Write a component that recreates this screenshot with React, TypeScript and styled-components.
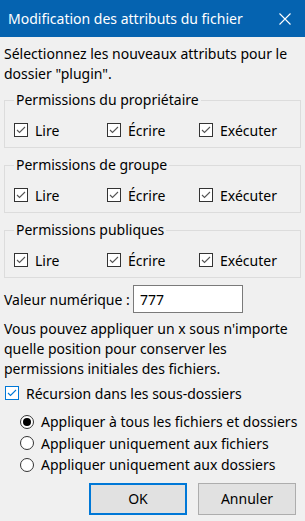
import styled, { createGlobalStyle } from 'styled-components';

const GlobalStyle = createGlobalStyle`
  html, body {
    margin: 0;
    padding: 0;
    background: #f0f0f0;
  }
  body {
    font-family: 'Noto Sans', 'Open Sans', sans-serif;
    font-size: 14px;
    color: #000;
  }
`;

const Window = styled.div`
  width: 305px;
  height: 521px;
  display: flex;
  flex-direction: column;
  background: #f0f0f0;
  overflow: hidden;
`;

const TitleBar = styled.div`
  height: 37px;
  flex: none;
  background: #0563b0;
  color: #fff;
  display: flex;
  align-items: center;
  justify-content: space-between;
  padding: 0 14px 0 8px;
  font-size: 14px;
`;

const Body = styled.div`
  padding: 0 4px;
  display: flex;
  flex-direction: column;
`;

const Text = styled.p<{ $top: number }>`
  margin: ${(p) => p.$top}px 0 0;
  line-height: 20px;
`;

const Group = styled.fieldset`
  margin: 6px 0 0;
  padding: 10px 0 7px 9px;
  border: 1px solid #dcdcdc;
  min-width: 0;
  & + & {
    margin-top: 7px;
  }
`;

const Legend = styled.legend`
  padding: 0 2px;
  margin-left: 0;
  line-height: 20px;
`;

const CheckGrid = styled.div`
  display: grid;
  grid-template-columns: 93px 92px 1fr;
`;

const Option = styled.label<{ $indent?: number }>`
  display: flex;
  align-items: center;
  height: 20px;
  gap: 7px;
  padding-left: ${(p) => p.$indent ?? 0}px;
`;

const Box = styled.span<{ $focus?: boolean }>`
  width: 14px;
  height: 14px;
  flex: none;
  box-sizing: border-box;
  border: 1px solid ${(p) => (p.$focus ? '#0078d7' : '#333')};
  background: #fff;
  display: flex;
  align-items: center;
  justify-content: center;
`;

const Radio = styled.span<{ $on?: boolean }>`
  width: 14px;
  height: 14px;
  flex: none;
  box-sizing: border-box;
  border: 1px solid #333;
  border-radius: 50%;
  background: #fff;
  display: flex;
  align-items: center;
  justify-content: center;
  &::after {
    content: '';
    width: 8px;
    height: 8px;
    border-radius: 50%;
    background: ${(p) => (p.$on ? '#000' : 'transparent')};
  }
`;

const ValueRow = styled.div`
  display: flex;
  align-items: center;
  margin-top: 7px;
`;

const ValueLabel = styled.span`
  width: 129px;
`;

const ValueInput = styled.div`
  width: 110px;
  height: 28px;
  box-sizing: border-box;
  border: 1px solid #7a7a7a;
  background: #fff;
  display: flex;
  align-items: center;
  padding-left: 6px;
`;

const RadioList = styled.div`
  margin-top: 8px;
  display: flex;
  flex-direction: column;
  & > label {
    height: 21.5px;
  }
`;

const Buttons = styled.div`
  display: flex;
  justify-content: flex-end;
  gap: 11px;
  padding-right: 5px;
  margin-top: 7px;
`;

const Button = styled.button<{ $primary?: boolean }>`
  width: 98px;
  height: 32px;
  box-sizing: border-box;
  background: #e1e1e1;
  border: ${(p) => (p.$primary ? '2px solid #0078d7' : '1px solid #adadad')};
  font: inherit;
  color: #000;
  padding: 0;
`;

const Check = ({ color }: { color: string }) => (
  <svg width="12" height="12" viewBox="0 0 12 12">
    <polyline points="2,6 4.5,8.5 10,3" fill="none" stroke={color} strokeWidth="1.1" />
  </svg>
);

const CheckOption = ({ label, focus }: { label: string; focus?: boolean }) => (
  <Option>
    <Box $focus={focus}>
      <Check color={focus ? '#0078d7' : '#555'} />
    </Box>
    {label}
  </Option>
);

const PermGroup = ({ title }: { title: string }) => (
  <Group>
    <Legend>{title}</Legend>
    <CheckGrid>
      <CheckOption label="Lire" />
      <CheckOption label="Écrire" />
      <CheckOption label="Exécuter" />
    </CheckGrid>
  </Group>
);

export default function App() {
  return (
    <Window>
      <GlobalStyle />
      <TitleBar>
        <span>Modification des attributs du fichier</span>
        <svg width="12" height="12" viewBox="0 0 12 12">
          <path d="M0.5 0.5 L11.5 11.5 M11.5 0.5 L0.5 11.5" stroke="#fff" strokeWidth="1.1" />
        </svg>
      </TitleBar>
      <Body>
        <Text $top={7}>
          Sélectionnez les nouveaux attributs pour le dossier "plugin".
        </Text>
        <PermGroup title="Permissions du propriétaire" />
        <PermGroup title="Permissions de groupe" />
        <PermGroup title="Permissions publiques" />
        <ValueRow>
          <ValueLabel>Valeur numérique :</ValueLabel>
          <ValueInput>777</ValueInput>
        </ValueRow>
        <Text $top={6}>
          Vous pouvez appliquer un x sous n'importe quelle position pour conserver les
          permissions initiales des fichiers.
        </Text>
        <Option style={{ marginTop: 4 }} $indent={1}>
          <Box $focus>
            <Check color="#0078d7" />
          </Box>
          Récursion dans les sous-dossiers
        </Option>
        <RadioList>
          <Option $indent={16}>
            <Radio $on />
            Appliquer à tous les fichiers et dossiers
          </Option>
          <Option $indent={16}>
            <Radio />
            Appliquer uniquement aux fichiers
          </Option>
          <Option $indent={16}>
            <Radio />
            Appliquer uniquement aux dossiers
          </Option>
        </RadioList>
        <Buttons>
          <Button $primary>OK</Button>
          <Button>Annuler</Button>
        </Buttons>
      </Body>
    </Window>
  );
}
